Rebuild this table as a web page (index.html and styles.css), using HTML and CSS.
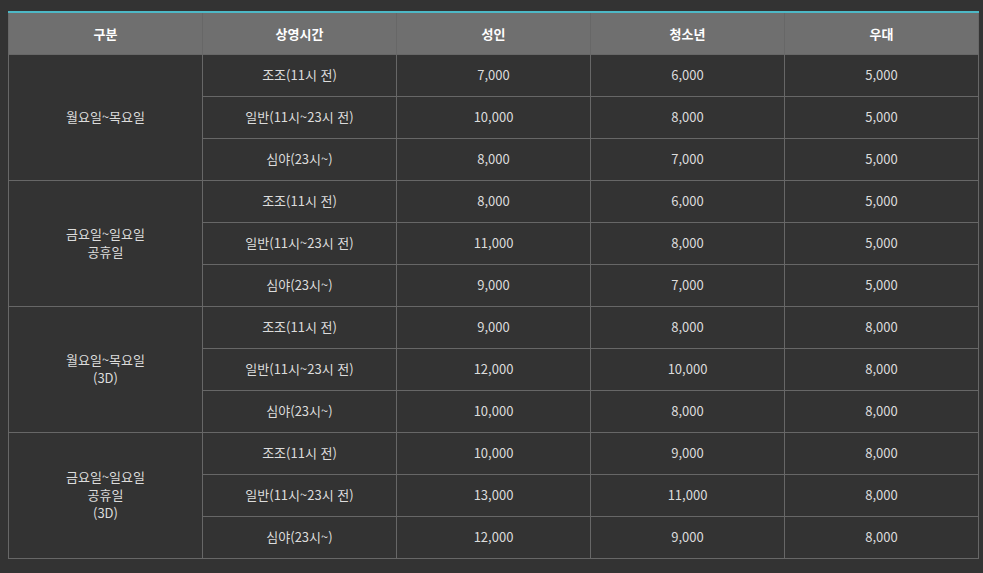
FILE: index.html
```html
<!DOCTYPE html>
<html lang="ko">
<head>
    <meta charset="UTF-8">
    <meta name="viewport" content="width=device-width, initial-scale=1.0">
    <title>관람요금</title>
    <link rel="stylesheet" href="styles.css">
</head>
<body>
    <table class="price">
        <colgroup>
            <col class="col"><col class="col"><col class="col"><col class="col"><col class="col-last">
        </colgroup>
        <thead>
            <tr>
                <th>구분</th>
                <th>상영시간</th>
                <th>성인</th>
                <th>청소년</th>
                <th>우대</th>
            </tr>
        </thead>
        <tbody>
            <tr>
                <td rowspan="3">월요일~목요일</td>
                <td>조조(11시 전)</td><td>7,000</td><td>6,000</td><td>5,000</td>
            </tr>
            <tr><td>일반(11시~23시 전)</td><td>10,000</td><td>8,000</td><td>5,000</td></tr>
            <tr><td>심야(23시~)</td><td>8,000</td><td>7,000</td><td>5,000</td></tr>

            <tr>
                <td rowspan="3">금요일~일요일<br>공휴일</td>
                <td>조조(11시 전)</td><td>8,000</td><td>6,000</td><td>5,000</td>
            </tr>
            <tr><td>일반(11시~23시 전)</td><td>11,000</td><td>8,000</td><td>5,000</td></tr>
            <tr><td>심야(23시~)</td><td>9,000</td><td>7,000</td><td>5,000</td></tr>

            <tr>
                <td rowspan="3">월요일~목요일<br>(3D)</td>
                <td>조조(11시 전)</td><td>9,000</td><td>8,000</td><td>8,000</td>
            </tr>
            <tr><td>일반(11시~23시 전)</td><td>12,000</td><td>10,000</td><td>8,000</td></tr>
            <tr><td>심야(23시~)</td><td>10,000</td><td>8,000</td><td>8,000</td></tr>

            <tr>
                <td rowspan="3">금요일~일요일<br>공휴일<br>(3D)</td>
                <td>조조(11시 전)</td><td>10,000</td><td>9,000</td><td>8,000</td>
            </tr>
            <tr><td>일반(11시~23시 전)</td><td>13,000</td><td>11,000</td><td>8,000</td></tr>
            <tr><td>심야(23시~)</td><td>12,000</td><td>9,000</td><td>8,000</td></tr>
        </tbody>
    </table>
</body>
</html>
```

FILE: styles.css
```css
body { margin: 0; padding: 11px 8px 0 8px; background: #333333; font-family: "Noto Sans CJK KR", "Noto Sans", sans-serif; }
.price { width: 970px; border-collapse: collapse; table-layout: fixed; border-top: 2px solid #4db8c6; }
.price .col { width: 194px; }
.price .col-last { width: 194px; }
.price th, .price td { border: 1px solid #676767; text-align: center; padding: 0; font-size: 13px; }
.price th { height: 41px; background: #6f6f6f; color: #ffffff; font-weight: bold; border-top: none; }
.price td { height: 40px; padding-bottom: 1px; color: #dcdcdc; line-height: 18px; }
```
